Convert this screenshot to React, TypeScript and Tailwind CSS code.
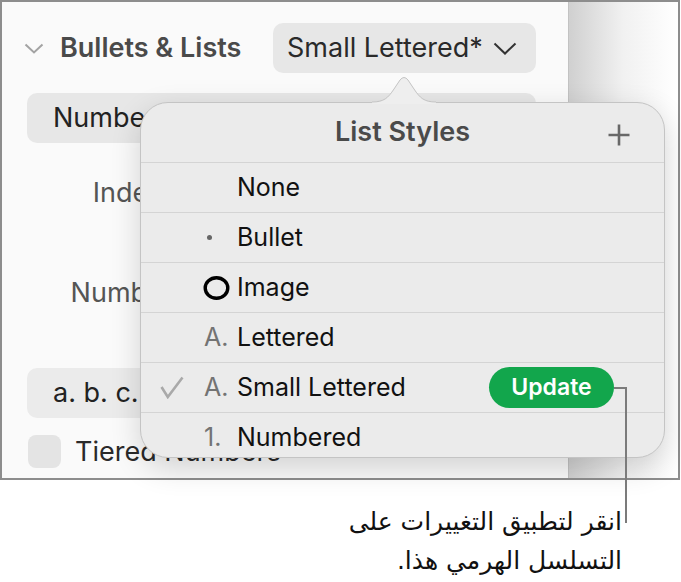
import React from "react";

const rows = [
  { label: "None", marker: "none" },
  { label: "Bullet", marker: "dot" },
  { label: "Image", marker: "circle" },
  { label: "Lettered", marker: "A." },
  { label: "Small Lettered", marker: "A.", checked: true, update: true },
  { label: "Numbered", marker: "1." },
];

function Marker({ kind }: { kind: string }) {
  if (kind === "none") return null;
  if (kind === "dot") return <span className="ml-[3px] block h-[5px] w-[5px] rounded-full bg-[#666]" />;
  if (kind === "circle")
    return (
      <svg width="27" height="24" viewBox="0 0 27 24" className="-ml-[1px]">
        <ellipse cx="13.5" cy="12" rx="11.3" ry="10.2" fill="none" stroke="#000" strokeWidth="3.4" />
      </svg>
    );
  return <span className="text-[#737373]">{kind}</span>;
}

export default function App() {
  return (
    <div className="relative h-[582px] w-[681px] overflow-hidden bg-white font-['Inter',sans-serif]">
      {/* screenshot frame */}
      <div className="flex h-[480px] w-[680px] border-2 border-[#8d8d8d]">
        <div className="w-[567px] border-r border-[#c2c2c2] bg-[#fafafa] pl-[25px] pr-[32px] pt-[21px] text-[27px]">
          {/* header */}
          <div className="flex h-[50px] items-center">
            <svg width="20" height="11" viewBox="0 0 20 11" className="-ml-[3px]">
              <polyline points="1.5,1.5 10,9.5 18.5,1.5" fill="none" stroke="#a3a3a3" strokeWidth="2" />
            </svg>
            <span className="ml-[16px] font-semibold text-[#4a4a4a]">Bullets &amp; Lists</span>
            <div className="ml-auto flex h-[50px] w-[263px] items-center rounded-[10px] bg-[#e7e7e7] pl-[14px] text-[#2a2a2a]">
              <span>Small Lettered*</span>
              <svg width="24" height="13" viewBox="0 0 24 13" className="ml-[10px]">
                <polyline points="1.5,1.5 12,11.5 22.5,1.5" fill="none" stroke="#333" strokeWidth="2" />
              </svg>
            </div>
          </div>

          <div className="mt-[20px] flex h-[50px] items-center rounded-[10px] bg-[#e7e7e7] pl-[26px] text-[#222]">
            Numbered
          </div>

          <div className="mt-[33px] w-[146px] text-right leading-[33px] text-[#555]">Indent</div>
          <div className="mt-[67px] w-[146px] text-right leading-[33px] text-[#555]">Number</div>

          <div className="mt-[59px] flex h-[50px] w-[300px] items-center rounded-[10px] bg-[#ebebeb] pl-[26px] text-[#222]">
            a. b. c.
          </div>

          <div className="mt-[17px] flex items-center">
            <span className="ml-[1px] block h-[33px] w-[33px] rounded-[8px] bg-[#e4e4e4]" />
            <span className="ml-[14px] leading-[33px] text-[#2a2a2a]">Tiered Numbers</span>
          </div>
        </div>
        <div className="flex-1 bg-gradient-to-r from-[#d0d0d0] via-[#f1f1f1] to-white" />
      </div>

      {/* caption */}
      <div
        dir="rtl"
        className="pr-[59px] pt-[22px] text-right font-['DejaVu_Sans',sans-serif] text-[25px] leading-[39px] text-[#111]"
      >
        <p>انقر لتطبيق التغييرات على</p>
        <p>التسلسل الهرمي هذا.</p>
      </div>

      {/* popover */}
      <div className="absolute left-[140px] top-[102px] h-[356px] w-[525px] overflow-hidden rounded-[28px] border border-[#c4c4c4] bg-[#ebebeb] shadow-[0_10px_30px_rgba(0,0,0,0.16)]">
        <div className="relative flex h-[59px] items-center justify-center">
          <span className="text-[27px] font-semibold text-[#4a4a4a]">List Styles</span>
          <svg width="24" height="24" viewBox="0 0 24 24" className="absolute right-[33px] top-[20px]">
            <path d="M12 1.5v21M1.5 12h21" stroke="#686868" strokeWidth="2.6" />
          </svg>
        </div>
        {rows.map((r) => (
          <div key={r.label} className="flex h-[50px] items-center border-t border-[#d4d4d4] text-[25px] text-[#111]">
            <div className="flex w-[63px] justify-end pr-[20px]">
              {r.checked && (
                <svg width="24" height="23" viewBox="0 0 24 23">
                  <path d="M1.5 11 L7.8 21 L22.5 1.5" fill="none" stroke="#a9a9a9" strokeWidth="2.6" />
                </svg>
              )}
            </div>
            <div className="flex w-[33px] items-center">
              <Marker kind={r.marker} />
            </div>
            <span>{r.label}</span>
            {r.update && (
              <span className="ml-auto mr-[50px] flex h-[41px] w-[125px] items-center justify-center rounded-full bg-[#12a64c] text-[23px] font-semibold text-white">
                Update
              </span>
            )}
          </div>
        ))}
      </div>

      {/* popover arrow */}
      <svg width="64" height="28" viewBox="0 0 64 28" className="absolute left-[372px] top-[76px]">
        <path d="M0 26 C12 26 16 22 22 13 L28 4 Q32 -1 36 4 L42 13 C48 22 52 26 64 26 L64 28 L0 28 Z" fill="#eeeeee" />
        <path d="M0 26 C12 26 16 22 22 13 L28 4 Q32 -1 36 4 L42 13 C48 22 52 26 64 26" fill="none" stroke="#c4c4c4" strokeWidth="1" />
      </svg>

      {/* callout */}
      <div className="absolute left-[614px] top-[387px] h-[2px] w-[13px] bg-[#7b7b7b]" />
      <div className="absolute left-[625px] top-[387px] h-[136px] w-[2px] bg-[#7b7b7b]" />
    </div>
  );
}
